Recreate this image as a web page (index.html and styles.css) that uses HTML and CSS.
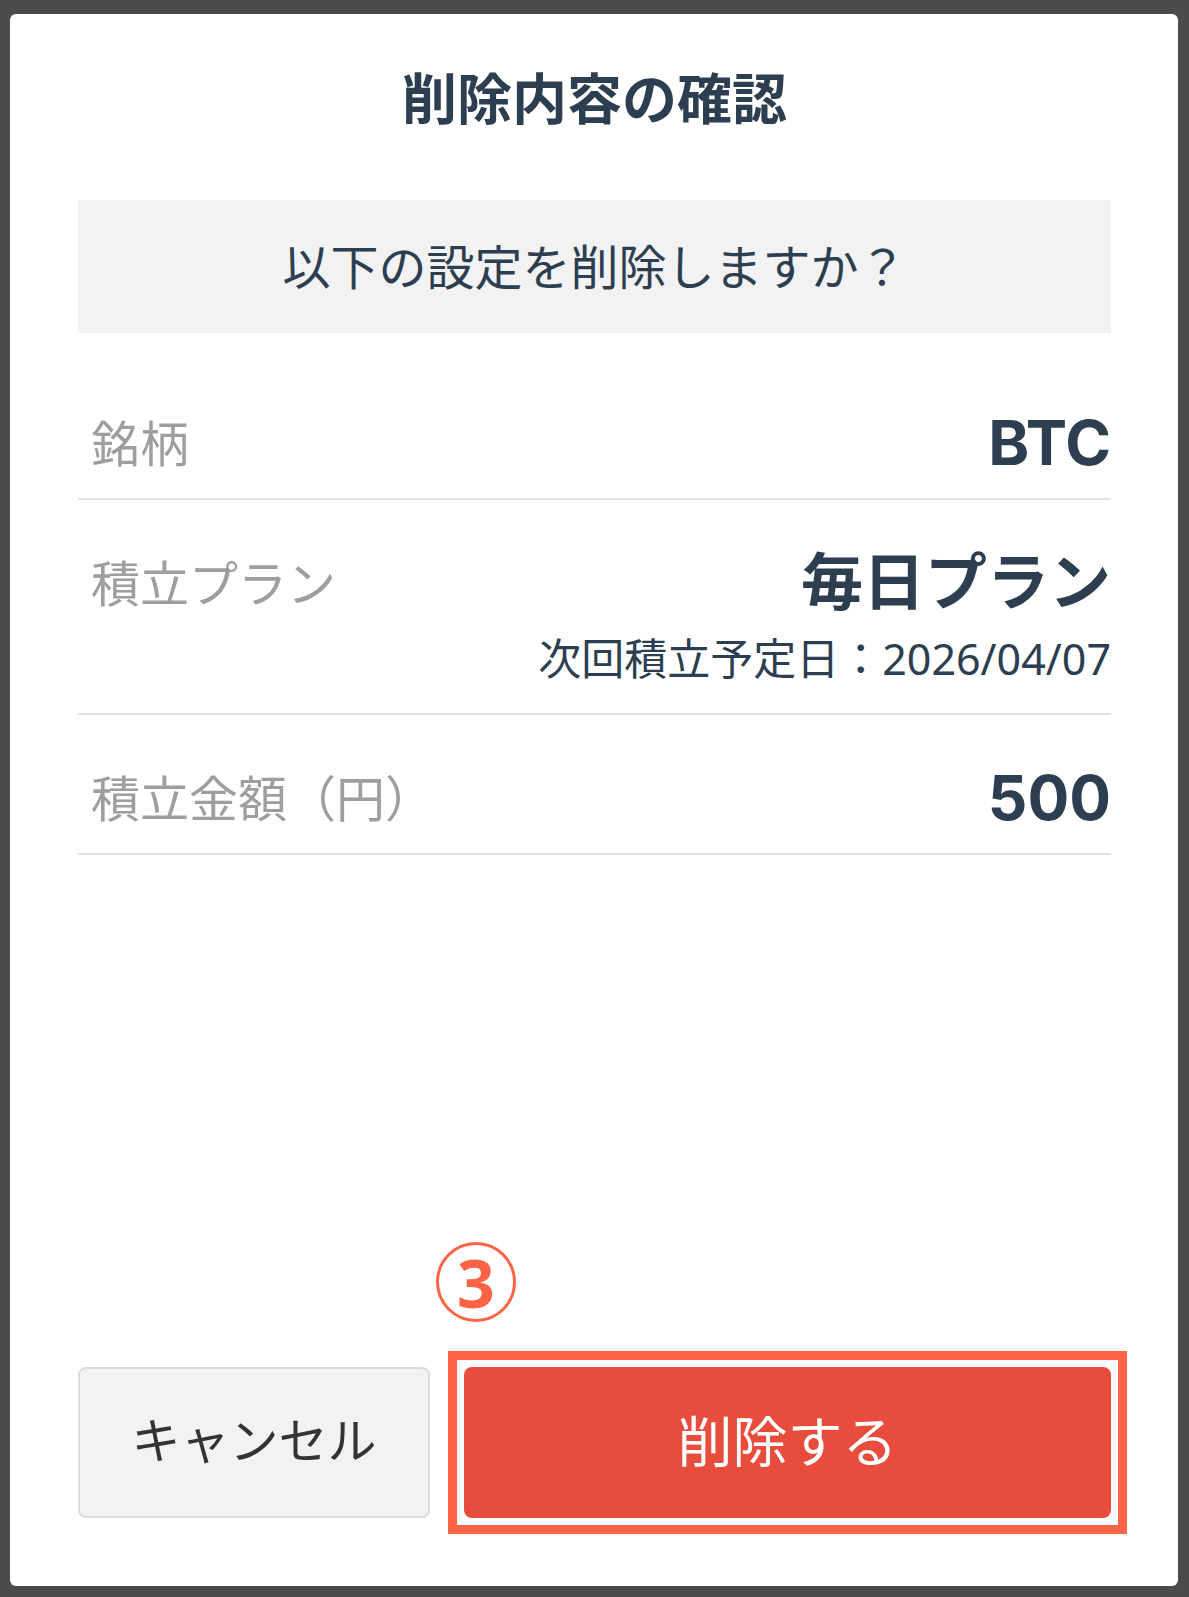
FILE: index.html
```html
<!doctype html>
<html lang="ja">
<head>
    <title>削除内容の確認</title>
    <link rel="stylesheet" href="styles.css">
</head>
<body>
    <div class="modal">
        <h1 class="modal-title">削除内容の確認</h1>

        <div class="notice">以下の設定を削除しますか？</div>

        <dl class="detail-list">
            <div class="detail-row">
                <dt class="detail-label">銘柄</dt>
                <dd class="detail-value">
                    <div class="value-main">BTC</div>
                </dd>
            </div>
            <div class="detail-row">
                <dt class="detail-label">積立プラン</dt>
                <dd class="detail-value">
                    <div class="value-main">毎日プラン</div>
                    <div class="value-sub">次回積立予定日：2026/04/07</div>
                </dd>
            </div>
            <div class="detail-row">
                <dt class="detail-label">積立金額（円）</dt>
                <dd class="detail-value">
                    <div class="value-main">500</div>
                </dd>
            </div>
        </dl>

        <div class="step-mark">3</div>

        <div class="actions">
            <button class="btn btn-cancel">キャンセル</button>
            <div class="highlight">
                <button class="btn btn-delete">削除する</button>
            </div>
        </div>
    </div>
</body>
</html>
```

FILE: styles.css
```css
/* page */
body {
    margin: 0;
    padding: 14px 11px 11px 10px;
    background-color: #4a4b4a;
    font-family: "Noto Sans", "Noto Sans CJK JP", sans-serif;
    color: #2c3e50;
}

.modal {
    width: 1168px;
    height: 1572px;
    box-sizing: border-box;
    background-color: #fff;
    border-radius: 6px;
    padding: 46px 67px 68px 68px;
    display: flex;
    flex-direction: column;
}

.modal-title {
    margin: 0;
    font-size: 55px;
    line-height: 76px;
    font-weight: 700;
    text-align: center;
}

.notice {
    margin-top: 64px;
    background-color: #f2f2f2;
    padding: 34px 0 33px;
    font-size: 48px;
    line-height: 66px;
    text-align: center;
}

/* details */
.detail-list {
    margin: 27px 0 0;
}

.detail-row {
    display: flex;
    justify-content: space-between;
    align-items: flex-start;
    padding: 45px 0 17px;
    border-bottom: 2px solid #e1e1e1;
}

.detail-label {
    margin: 0;
    padding-left: 13px;
    font-size: 49px;
    line-height: 76px;
    color: #9e9e9e;
}

.detail-value {
    margin: 0;
    text-align: right;
}

.value-main {
    font-family: Inter, "Noto Sans CJK JP", sans-serif;
    font-size: 62px;
    line-height: 76px;
    font-weight: 700;
}

.value-sub {
    font-size: 43px;
    line-height: 75px;
}

/* annotation */
.step-mark {
    margin-top: auto;
    margin-left: 358px;
    margin-bottom: 45px;
    width: 80px;
    height: 80px;
    box-sizing: border-box;
    border: 3px solid #ff6347;
    border-radius: 50%;
    color: #ff6347;
    font-size: 66px;
    font-weight: 700;
    display: flex;
    align-items: center;
    justify-content: center;
}

/* buttons */
.actions {
    display: flex;
    gap: 34px;
    height: 151px;
}

.btn {
    font: inherit;
    cursor: pointer;
    border-radius: 8px;
    padding: 0 0 10px;
}

.btn-cancel {
    width: 352px;
    background-color: #f2f2f2;
    border: 2px solid #dcdcdc;
    font-size: 49px;
    color: #333;
}

.highlight {
    flex: 1;
    margin: -16px;
    border: 9px solid #ff6347;
    padding: 7px;
    display: flex;
}

.btn-delete {
    flex: 1;
    background-color: #e74c3c;
    border: none;
    color: #fff;
    font-size: 55px;
}
```
